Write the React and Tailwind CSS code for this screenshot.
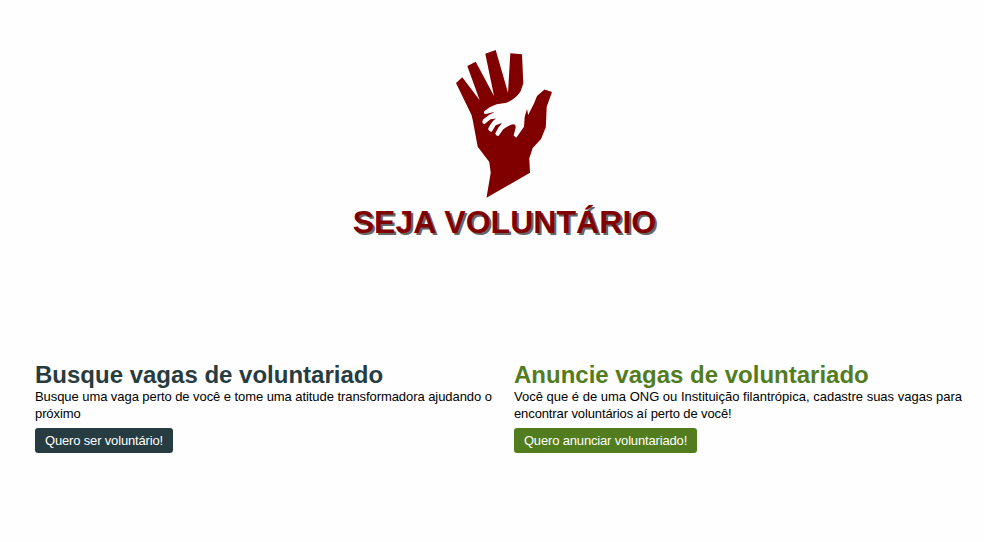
function HandLogo() {
  return (
    <svg className="mr-[2px] block h-[150px] w-[98px]" viewBox="455 49 98 150" aria-hidden="true">
      <path
        fill="#800000"
        d="M456 83 L462.3 77.3 L479.7 100.3 L467.3 66 L475.7 61.7 L494 96 L485.3 53.7 L495.7 50 L508 92.7 L510.3 53.3 L522 54.3 L523.3 83.5 L520.5 91.5 Q516 98.5 506.7 102.8 L496.7 104.3 Q489 107 484.3 111.2 Q483.5 113.5 485 114.2 L495 111.8 Q488 115 483.3 119.3 Q481 123 484.3 124.2 L490.5 119.2 L496 118.5 Q492 121 488.3 128.3 Q488 131.5 491.7 131.7 L495.7 125.3 L502 123 L498.5 127.5 L495.2 133.5 Q496 136 498.5 136 L503.3 129.3 Q508 125.5 513 124.3 Q516 124 515.6 128 L513.6 135.5 L516.3 137.7 L524 126.7 L524.7 116.7 L527 109 L528.2 115 L534 103.5 L537 96 L544.5 89.5 L552 92 L546.7 106.7 L545.8 127.3 L541 139 L532.7 148 L529.3 158.3 L530 172.7 L486.5 197.8 L490.7 172.7 L489.3 162 L477.7 146.7 L472.7 120 L471.5 115 Z"
      />
    </svg>
  );
}

function Option({ title, children, action, titleClass, buttonClass }) {
  return (
    <section className="flex flex-col items-start">
      <h2 className={`text-[24px] leading-[27px] font-bold whitespace-nowrap ${titleClass}`}>{title}</h2>
      <p className="text-[13px] leading-[17px] whitespace-nowrap text-black">{children}</p>
      <button className={`mt-[6px] h-[25px] rounded-[3px] text-[13px] leading-[25px] tracking-[-0.16px] whitespace-nowrap text-white ${buttonClass}`}>
        {action}
      </button>
    </section>
  );
}

export default function App() {
  return (
    <main className="h-[542px] w-[984px] overflow-hidden bg-[#fefefe] font-['Liberation_Sans',Arial,sans-serif]">
      <header className="flex h-[361px] flex-col items-center pt-[49px] pl-[25px]">
        <HandLogo />
        <h1 className="mt-[5px] text-[32px] leading-[37px] font-bold tracking-[0.05px] whitespace-nowrap text-[#800000] [text-shadow:2px_2px_0_#666]">
          SEJA VOLUNTÁRIO
        </h1>
      </header>
      <div className="grid grid-cols-[479px_1fr] pl-[35px]">
        <Option
          title="Busque vagas de voluntariado"
          action="Quero ser voluntário!"
          titleClass="text-[#263c41]"
          buttonClass="w-[138px] bg-[#263c41]"
        >
          <span className="block tracking-[-0.067px]">
            Busque uma vaga perto de você e tome uma atitude transformadora ajudando o
          </span>
          <span className="block tracking-[-0.1px]">próximo</span>
        </Option>
        <Option
          title="Anuncie vagas de voluntariado"
          action="Quero anunciar voluntariado!"
          titleClass="text-[#527d1e]"
          buttonClass="w-[183px] bg-[#527d1e]"
        >
          <span className="block">
            Você que é de uma ONG ou Instituição filantrópica, cadastre suas vagas para
          </span>
          <span className="block tracking-[-0.11px]">encontrar voluntários aí perto de você!</span>
        </Option>
      </div>
    </main>
  );
}
